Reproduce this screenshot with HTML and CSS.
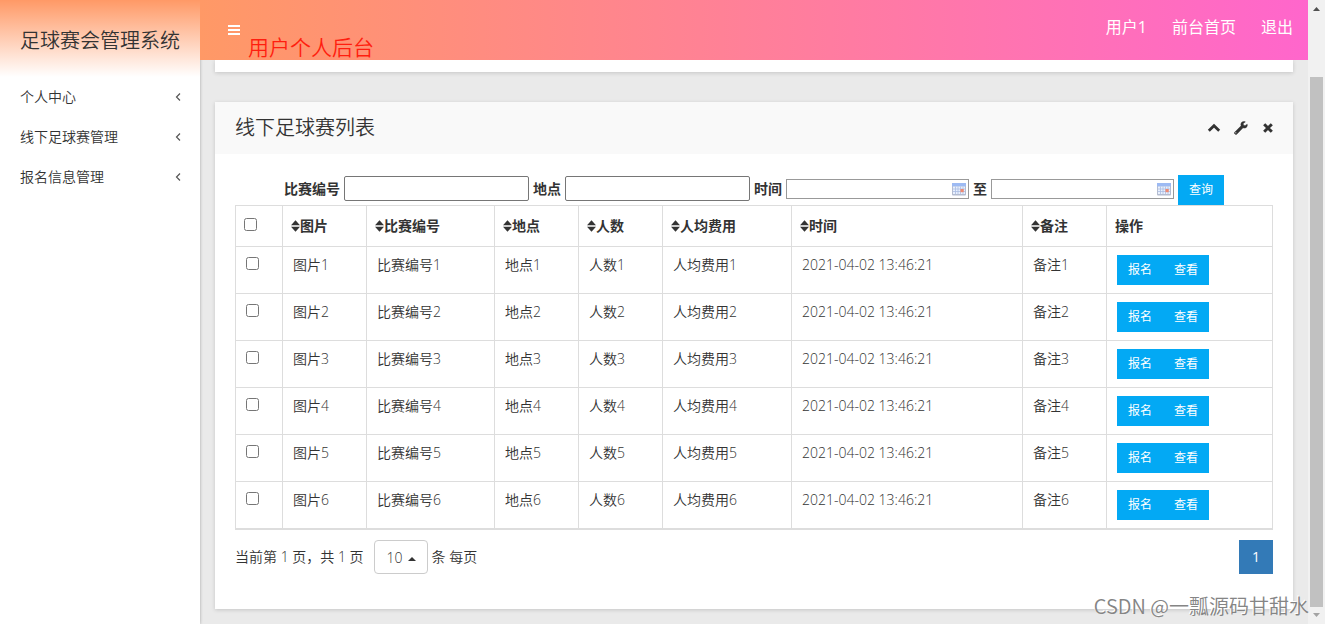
FILE: index.html
```html
<!DOCTYPE html>
<html lang="zh-CN">
<head>
<meta charset="utf-8">
<title>足球赛会管理系统</title>
<link rel="stylesheet" href="styles.css">
</head>
<body>
<svg class="defs" aria-hidden="true">
  <symbol id="i-left" viewBox="0 0 6 10"><path d="M5 1.500 1.500 5 5 8.500" fill="none" stroke="currentColor" stroke-width="1.2"/></symbol>
  <symbol id="i-sort" viewBox="0 0 9 12"><path d="M4.500 0.200 9 5.300H0zM4.500 11.800 0 6.700H9z" fill="currentColor"/></symbol>
  <symbol id="i-cal" viewBox="0 0 16 14">
    <rect x="1" y="1" width="14" height="12.5" rx="1" fill="#b4bcd0"/>
    <rect x="1" y="1" width="14" height="3.500" fill="#9dbaf3"/>
    <path d="M2 4.500h12V12H2z" fill="#e9f0fd"/>
    <path d="M2 7h12M2 9.500h12M4.500 4.500V12M7 4.500V12M9.500 4.500V12M12 4.500V12" stroke="#a9bce2" stroke-width=".8"/>
    <rect x="9.500" y="7" width="3.200" height="3.200" fill="#ef8a72"/>
  </symbol>
</svg>
<div class="app">
  <aside class="sidebar">
    <h1 class="brand">足球赛会管理系统</h1>
    <nav class="menu">
      <a href="#">个人中心<svg><use href="#i-left"/></svg></a>
      <a href="#">线下足球赛管理<svg><use href="#i-left"/></svg></a>
      <a href="#">报名信息管理<svg><use href="#i-left"/></svg></a>
    </nav>
  </aside>
  <div class="page">
    <header class="topbar">
      <button class="toggle" type="button" aria-label="菜单"><svg viewBox="0 0 12 10"><path d="M0 1h12M0 5h12M0 9h12" stroke="#fff" stroke-width="2"/></svg></button>
      <div class="area">用户个人后台</div>
      <nav class="links"><a href="#">用户1</a><a href="#">前台首页</a><a href="#">退出</a></nav>
    </header>
    <main class="content">
      <section class="panel panel-prev"></section>
      <section class="panel">
        <div class="panel-head">
          <h2>线下足球赛列表</h2>
          <div class="tools">
            <button type="button" aria-label="收起"><svg viewBox="0 0 14 14"><path d="M1.800 9.800 7 4.800l5.200 5" fill="none" stroke="currentColor" stroke-width="2.800"/></svg></button>
            <button type="button" aria-label="设置"><svg viewBox="0 0 14 14"><path d="M13.200 3.300 11 4.700 9.300 3.900V2.200L11.300.9C9.700.1 7.300.8 6.900 3c-.1.600 0 1.200.2 1.800L1 10.900c-.7.700-.7 1.500-.1 2.100s1.400.6 2.100-.1l6-6.100c2 .8 4.200-.4 4.300-2.400 0-.4 0-.7-.1-1.100zM2 12.400a.7.700 0 1 1 0-1.300.7.700 0 0 1 0 1.300z" fill="currentColor" stroke="currentColor" stroke-width=".5"/></svg></button>
            <button type="button" aria-label="关闭"><svg viewBox="0 0 14 14"><path d="m3.200 3.200 7.600 7.600M10.800 3.200l-7.600 7.600" stroke="currentColor" stroke-width="3"/></svg></button>
          </div>
        </div>
        <div class="panel-body">
          <form class="search">
            <label for="no">比赛编号</label><input id="no" type="text" class="field">
            <label for="place">地点</label><input id="place" type="text" class="field">
            <label for="from">时间</label><span class="date"><input id="from" type="text"><svg><use href="#i-cal"/></svg></span>
            <label for="to">至</label><span class="date"><input id="to" type="text"><svg><use href="#i-cal"/></svg></span>
            <button type="button" class="btn">查询</button>
          </form>
          <table class="list">
            <colgroup><col class="c-check"><col class="c-short"><col class="c-mid"><col class="c-short"><col class="c-short"><col class="c-cost"><col class="c-time"><col class="c-short"><col></colgroup>
            <thead><tr>
              <th><input type="checkbox" aria-label="全选"></th>
              <th><svg><use href="#i-sort"/></svg>图片</th>
              <th><svg><use href="#i-sort"/></svg>比赛编号</th>
              <th><svg><use href="#i-sort"/></svg>地点</th>
              <th><svg><use href="#i-sort"/></svg>人数</th>
              <th><svg><use href="#i-sort"/></svg>人均费用</th>
              <th><svg><use href="#i-sort"/></svg>时间</th>
              <th><svg><use href="#i-sort"/></svg>备注</th>
              <th>操作</th>
            </tr></thead>
            <tbody>
              <tr><td><input type="checkbox" aria-label="选择1"></td><td>图片1</td><td>比赛编号1</td><td>地点1</td><td>人数1</td><td>人均费用1</td><td>2021-04-02 13:46:21</td><td>备注1</td><td><div class="ops"><button type="button" class="btn">报名</button><button type="button" class="btn">查看</button></div></td></tr>
              <tr><td><input type="checkbox" aria-label="选择2"></td><td>图片2</td><td>比赛编号2</td><td>地点2</td><td>人数2</td><td>人均费用2</td><td>2021-04-02 13:46:21</td><td>备注2</td><td><div class="ops"><button type="button" class="btn">报名</button><button type="button" class="btn">查看</button></div></td></tr>
              <tr><td><input type="checkbox" aria-label="选择3"></td><td>图片3</td><td>比赛编号3</td><td>地点3</td><td>人数3</td><td>人均费用3</td><td>2021-04-02 13:46:21</td><td>备注3</td><td><div class="ops"><button type="button" class="btn">报名</button><button type="button" class="btn">查看</button></div></td></tr>
              <tr><td><input type="checkbox" aria-label="选择4"></td><td>图片4</td><td>比赛编号4</td><td>地点4</td><td>人数4</td><td>人均费用4</td><td>2021-04-02 13:46:21</td><td>备注4</td><td><div class="ops"><button type="button" class="btn">报名</button><button type="button" class="btn">查看</button></div></td></tr>
              <tr><td><input type="checkbox" aria-label="选择5"></td><td>图片5</td><td>比赛编号5</td><td>地点5</td><td>人数5</td><td>人均费用5</td><td>2021-04-02 13:46:21</td><td>备注5</td><td><div class="ops"><button type="button" class="btn">报名</button><button type="button" class="btn">查看</button></div></td></tr>
              <tr><td><input type="checkbox" aria-label="选择6"></td><td>图片6</td><td>比赛编号6</td><td>地点6</td><td>人数6</td><td>人均费用6</td><td>2021-04-02 13:46:21</td><td>备注6</td><td><div class="ops"><button type="button" class="btn">报名</button><button type="button" class="btn">查看</button></div></td></tr>
            </tbody>
          </table>
          <div class="pager">
            <label for="size">当前第 1 页，共 1 页</label>
            <span class="size"><select id="size"><option>10</option><option>25</option><option>50</option></select><svg viewBox="0 0 8 4"><path d="M0 4 4 0l4 4z" fill="#333"/></svg></span>
            <span>条 每页</span>
            <a href="#" class="current">1</a>
          </div>
        </div>
      </section>
    </main>
  </div>
  <div class="scroll" aria-hidden="true">
    <svg viewBox="0 0 17 17"><path d="M5 11l3.500-4 3.500 4z" fill="#505050"/></svg>
    <div class="track"><div class="thumb"></div></div>
    <svg viewBox="0 0 17 17"><path d="M5 6l3.500 4L12 6z" fill="#a3a3a3"/></svg>
  </div>
  <div class="watermark">CSDN @一瓢源码甘甜水</div>
</div>
</body>
</html>
```
FILE: styles.css
```css
* { box-sizing: border-box; }
body {
  margin: 0;
  font: 350 14px/20px "Open Sans", "Noto Sans CJK SC", sans-serif;
  color: #333;
  background: #eaeaea;
}
a { color: inherit; text-decoration: none; }
button, input, select { font-family: inherit; font-weight: inherit; color: inherit; margin: 0; }
button { border: 0; padding: 0; background: none; }
svg { display: block; }
.defs { position: absolute; width: 0; height: 0; }

.app {
  position: relative;
  display: grid;
  grid-template-columns: 200px minmax(0, 1fr) 17px;
  min-height: 100vh;
}

.sidebar { background: #fff; box-shadow: 0 0 3px rgba(0, 0, 0, .3); }
.brand {
  margin: 0;
  padding: 21px 20px 16px;
  font-size: 20px;
  line-height: 40px;
  font-weight: 350;
  white-space: nowrap;
  background: linear-gradient(#ff9966, #fff);
}
.menu a {
  display: flex;
  align-items: center;
  justify-content: space-between;
  padding: 0 19px 0 20px;
  line-height: 40px;
}
.menu svg { width: 6px; height: 10px; color: #555; }

.topbar {
  display: flex;
  height: 60px;
  padding: 0 15px 0 28px;
  background: linear-gradient(to right, #ff9966, #ff66cc);
}
.toggle { width: 12px; height: 60px; }
.area {
  margin-left: 8px;
  padding-top: 34px;
  font-size: 21px;
  line-height: 26px;
  color: #ff1e0f;
}
.links {
  display: flex;
  gap: 25px;
  margin-left: auto;
  font-size: 16px;
  line-height: 54px;
  font-weight: 400;
  color: #fff;
}

.content { padding: 0 15px 15px; }
.panel { background: #fff; box-shadow: 0 1px 4px rgba(0, 0, 0, .16); margin-bottom: 30px; }
.panel:last-child { margin-bottom: 0; }
.panel-prev { height: 12px; clip-path: inset(0 -5px -5px -5px); }
.panel-head {
  display: flex;
  align-items: center;
  justify-content: space-between;
  height: 52px;
  padding: 0 18px 0 20px;
  background: #f9f9f9;
}
.panel-head h2 { margin: 0; font-size: 20px; font-weight: 350; }
.tools { display: flex; gap: 13px; }
.tools svg { width: 14px; height: 14px; }
.panel-body { padding: 19px 20px 35px; }

.search {
  display: flex;
  align-items: center;
  gap: 4px;
  height: 32px;
  padding: 0 0 1px 49px;
  font-weight: 600;
  white-space: nowrap;
}
.search input { border: 1px solid #767676; background: #fff; }
.field { width: 185px; height: 25px; border-radius: 2px; }
.date { position: relative; }
.date input { display: block; width: 183px; height: 20px; border-color: #999; }
.date svg { position: absolute; right: 2px; top: 3px; width: 16px; height: 14px; }
.btn {
  padding: 0 11px;
  font-size: 12px;
  line-height: 30px;
  font-weight: 400;
  color: #fff;
  background: #03a9f4;
}
.search .btn { align-self: flex-end; margin-bottom: -1px; }

.list {
  width: 100%;
  table-layout: fixed;
  border-collapse: collapse;
  border: 1px solid #ddd;
  border-bottom-width: 2px;
}
.c-check { width: 47px; }
.c-short { width: 84px; }
.c-mid { width: 128px; }
.c-cost { width: 129px; }
.c-time { width: 231px; }
.list th, .list td { border: 1px solid #ddd; text-align: left; vertical-align: top; }
.list tr:last-child td { border-bottom-width: 2px; }
.list th { padding: 10px 8px; font-weight: 600; }
.list td { padding: 8px 10px; }
.list th svg { display: inline-block; width: 9px; height: 12px; vertical-align: -1px; }
.list input { display: block; width: 13px; height: 13px; margin-top: 2px; }
.ops { display: flex; }

.pager { display: flex; align-items: center; padding-top: 10px; }
.size { position: relative; margin: 0 4px 0 10px; }
.size select {
  display: block;
  appearance: none;
  width: 54px;
  height: 34px;
  padding: 0 12px;
  font-size: 14px;
  border: 1px solid #ccc;
  border-radius: 4px;
  background: #fff;
}
.size svg { position: absolute; right: 12px; top: 17px; width: 8px; height: 4px; pointer-events: none; }
.current {
  width: 34px;
  margin-left: auto;
  line-height: 34px;
  text-align: center;
  font-weight: 400;
  color: #fff;
  background: #337ab7;
}

.scroll { display: flex; flex-direction: column; background: #f1f1f1; }
.track { flex: 1; display: grid; grid-template-rows: 60fr 530fr; padding: 0 2px; }
.thumb { grid-row: 2; background: #c1c1c1; }

.watermark {
  position: absolute;
  right: 16px;
  bottom: 4px;
  font: 350 20px/28px "Noto Sans CJK SC", sans-serif;
  color: #858585;
  text-shadow: -1px -1px 0 #fff;
  white-space: nowrap;
}
```
